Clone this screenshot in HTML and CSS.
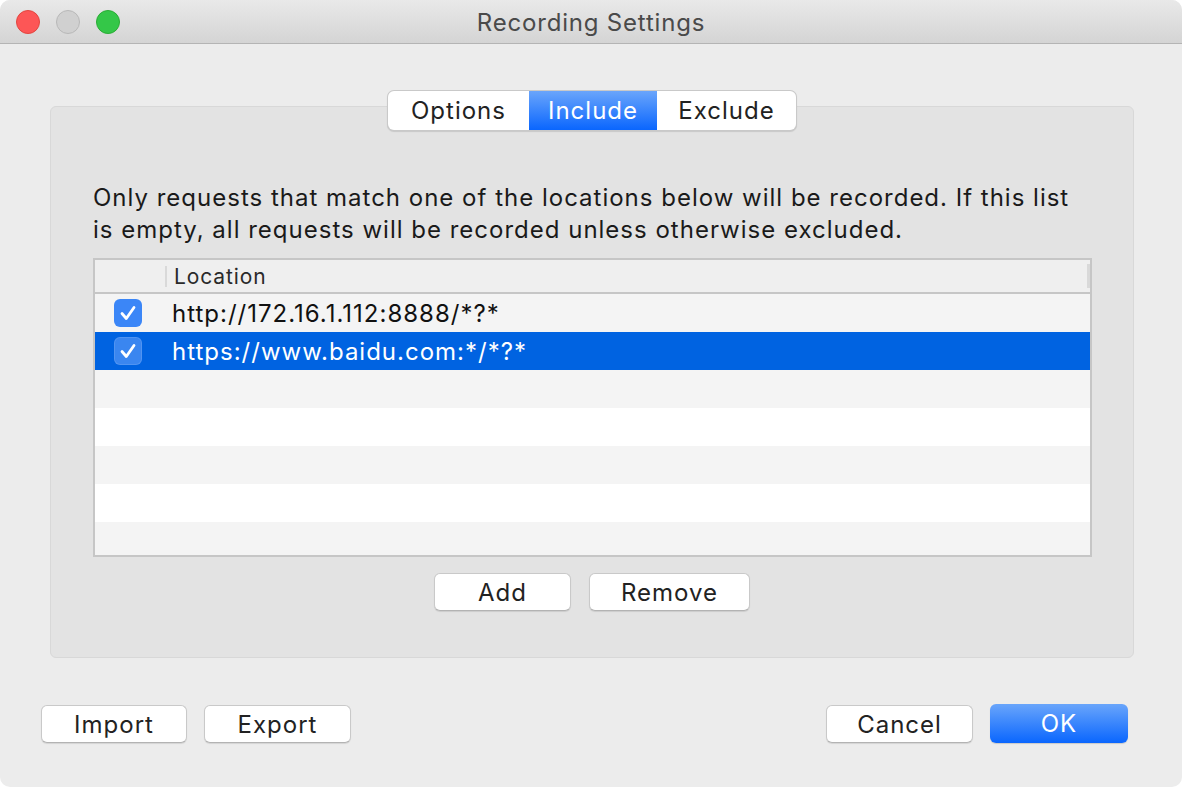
FILE: index.html
```html
<!DOCTYPE html>
<html>
<head>
<meta charset="utf-8">
<link rel="stylesheet" href="styles.css">
</head>
<body>
<div class="window">
  <div class="titlebar">
    <div class="lights">
      <span class="light red"></span>
      <span class="light gray"></span>
      <span class="light green"></span>
    </div>
    <div class="title">Recording Settings</div>
  </div>
  <div class="content">
    <div class="group">
      <div class="tabs">
        <div class="tab">Options</div>
        <div class="tab active">Include</div>
        <div class="tab">Exclude</div>
      </div>
      <p class="desc">Only requests that match one of the locations below will be recorded. If this list is empty, all requests will be recorded unless otherwise excluded.</p>
      <div class="table">
        <div class="thead">
          <div class="col-check"></div>
          <div class="col-loc">Location</div>
          <div class="col-end"></div>
        </div>
        <div class="row alt">
          <div class="col-check"><span class="check"><svg viewBox="0 0 28 28" width="28" height="28"><path d="M8 14.5 L12.3 19.5 L20 8.5" fill="none" stroke="#fff" stroke-width="2.8" stroke-linecap="round" stroke-linejoin="round"/></svg></span></div>
          <div class="col-loc">http://172.16.1.112:8888/*?*</div>
        </div>
        <div class="row selected">
          <div class="col-check"><span class="check"><svg viewBox="0 0 28 28" width="28" height="28"><path d="M8 14.5 L12.3 19.5 L20 8.5" fill="none" stroke="#fff" stroke-width="2.8" stroke-linecap="round" stroke-linejoin="round"/></svg></span></div>
          <div class="col-loc">https://www.baidu.com:*/*?*</div>
        </div>
        <div class="row alt"></div>
        <div class="row"></div>
        <div class="row alt"></div>
        <div class="row"></div>
        <div class="row alt last"></div>
      </div>
      <div class="group-buttons">
        <button class="btn btn-add">Add</button>
        <button class="btn btn-remove">Remove</button>
      </div>
    </div>
    <div class="footer">
      <div class="footer-left">
        <button class="btn btn-import">Import</button>
        <button class="btn btn-export">Export</button>
      </div>
      <div class="footer-right">
        <button class="btn btn-cancel">Cancel</button>
        <button class="btn btn-ok">OK</button>
      </div>
    </div>
  </div>
</div>
</body>
</html>
```

FILE: styles.css
```css
html, body {
  margin: 0;
  padding: 0;
  background: #ffffff;
}
body {
  width: 1184px;
  height: 788px;
  font-family: Inter, "Liberation Sans", Arial, sans-serif;
  color: #222;
}
.window {
  width: 1182px;
  height: 787px;
  background: #ececec;
  border-radius: 10px;
  overflow: hidden;
  display: flex;
  flex-direction: column;
}
.titlebar {
  height: 43px;
  flex: none;
  background: linear-gradient(#e9e9e9, #d4d4d4);
  border-bottom: 1px solid #b4b4b4;
  display: flex;
  align-items: center;
  position: relative;
}
.lights {
  display: flex;
  gap: 16px;
  padding-left: 16px;
}
.light {
  width: 22px;
  height: 22px;
  border-radius: 50%;
  display: block;
}
.light.red { background: #fd5656; border: 1px solid #e2463f; }
.light.gray { background: #d0d0d0; border: 1px solid #b8b8b8; }
.light.green { background: #34c748; border: 1px solid #2aac35; }
.title {
  position: absolute;
  left: 0;
  right: 0;
  top: 2px;
  bottom: 0;
  display: flex;
  align-items: center;
  justify-content: center;
  font-size: 24px;
  letter-spacing: 0.8px;
  color: #4a4a4a;
  pointer-events: none;
}
.content {
  flex: 1;
  display: flex;
  flex-direction: column;
}
.group {
  margin: 62px 0 0 50px;
  background: #e3e3e3;
  border: 1px solid #d8d8d8;
  border-radius: 6px;
  padding: 0 42px;
  box-sizing: border-box;
  width: 1084px;
  height: 552px;
  display: flex;
  flex-direction: column;
}
.tabs {
  align-self: center;
  margin-top: -16px;
  display: flex;
  height: 39px;
  background: #fff;
  border-radius: 6px;
  box-shadow: 0 0 0 1px #c9c9c9, 0 1px 1px 1px rgba(0,0,0,0.12);
  overflow: hidden;
  font-size: 24px;
  letter-spacing: 1px;
}
.tab {
  display: flex;
  align-items: center;
  justify-content: center;
  color: #222;
  border-left: 1px solid #e3e3e3;
}
.tab:first-child { border-left: none; width: 141px; }
.tab:nth-child(2) { width: 128px; }
.tab:nth-child(3) { width: 139px; }
.tab.active {
  background: linear-gradient(#6aa5fb, #0a66fe);
  color: #fff;
  border-left: none;
}
.tab.active + .tab { border-left: none; }
.desc {
  margin: 52px 0 0 0;
  font-size: 24px;
  letter-spacing: 1px;
  line-height: 32px;
  color: #1a1a1a;
}
.table {
  margin-top: 12px;
  width: 999px;
  border: 2px solid #c6c6c6;
  box-sizing: border-box;
  background: #fff;
  font-size: 24px;
  letter-spacing: 1px;
}
.thead {
  height: 32px;
  background: #efefef;
  border-bottom: 2px solid #c6c6c6;
  display: flex;
  align-items: center;
  font-size: 21px;
  letter-spacing: 0.9px;
  color: #2a2a2a;
}
.thead .col-check {
  width: 72px;
  height: 21px;
  border-right: 2px solid #d9d9d9;
}
.thead .col-loc {
  flex: 1;
  padding-left: 7px;
}
.thead .col-end {
  width: 3px;
  height: 24px;
  background: #d9d9d9;
}
.col-check {
  width: 70px;
  flex: none;
  display: flex;
  justify-content: center;
  box-sizing: border-box;
}
.row .col-check {
  padding-right: 4px;
}
.col-loc {
  padding-left: 7px;
}
.row {
  height: 38px;
  display: flex;
  align-items: center;
  background: #ffffff;
  color: #111;
}
.row.alt { background: #f4f4f4; }
.row.last { height: 33px; }
.row.selected {
  background: #0063e1;
  color: #fff;
}
.check {
  width: 28px;
  height: 28px;
  border-radius: 6px;
  background: #3b86f7;
  display: block;
}
.check svg { display: block; }
.row.selected .check {
  background: #3a86f0;
  box-shadow: inset 0 0 0 1px rgba(255,255,255,0.12);
}
.group-buttons {
  display: flex;
  justify-content: center;
  gap: 18px;
  margin-top: 16px;
}
.btn {
  height: 38px;
  font-family: Inter, "Liberation Sans", Arial, sans-serif;
  font-size: 24px;
  letter-spacing: 1px;
  color: #222;
  background: #fff;
  border: 1px solid #c9c9c9;
  border-bottom-color: #b3b3b3;
  border-radius: 6px;
  box-shadow: 0 1px 1px rgba(0,0,0,0.10);
  padding: 0;
  display: flex;
  align-items: center;
  justify-content: center;
}
.btn-add { width: 137px; }
.btn-remove { width: 161px; }
.footer {
  display: flex;
  justify-content: space-between;
  margin-top: 47px;
  padding: 0 54px 0 41px;
}
.footer-left, .footer-right {
  display: flex;
  gap: 17px;
}
.btn-import { width: 146px; }
.btn-export { width: 147px; }
.btn-cancel { width: 147px; }
.btn-ok {
  width: 138px;
  height: 39px;
  margin-top: -1px;
  color: #fff;
  border: none;
  background: linear-gradient(#69a5fb, #0a66fe);
  box-shadow: 0 1px 1px rgba(0,0,0,0.15);
}
```
